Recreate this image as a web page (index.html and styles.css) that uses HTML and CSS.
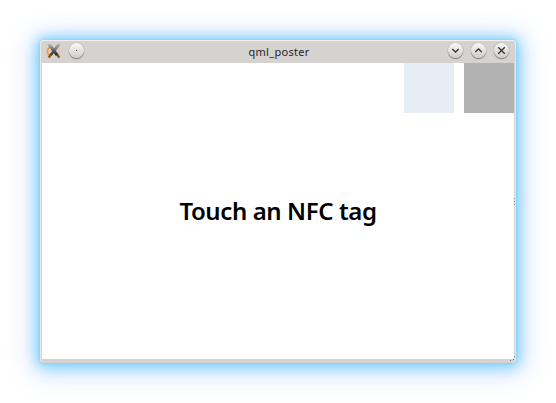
FILE: index.html
```html
<!DOCTYPE html>
<html lang="en">
<head>
<meta charset="utf-8">
<title>qml_poster</title>
<link rel="stylesheet" href="styles.css">
</head>
<body>
<div class="window">
  <header class="titlebar">
    <svg class="app-icon" width="16" height="16" viewBox="0 0 16 16">
      <defs>
        <linearGradient id="blade" x1="0" y1="0" x2="0" y2="1"><stop offset="0" stop-color="#b4b4b4"/><stop offset=".5" stop-color="#666"/><stop offset="1" stop-color="#1c1c1c"/></linearGradient>
      </defs>
      <path d="M4 4.2Q1 5.5 1.4 9Q1.8 11.4 3.6 12" fill="none" stroke="#ff951c" stroke-width="1.6"/>
      <path d="M12 4Q14.5 8 12.5 12" fill="none" stroke="#f5c795" stroke-width="1"/>
      <path d="M1.2 1.2L5 1.2L12.6 11.6L10 13L6.5 8.8Z" fill="url(#blade)"/>
      <path d="M14 .8L10.8 1.5L3.5 11.4L5.6 13L14 2.6Z" fill="url(#blade)" opacity=".9"/>
      <path d="M4.8 11.8L2.6 14.5M11.2 11.8L13.4 14.5" stroke="#80531c" stroke-width="2.2"/>
    </svg>
    <span class="button"><svg width="15" height="15" viewBox="0 0 15 15"><circle cx="7.5" cy="7.5" r=".55" fill="#333"/></svg></span>
    <h1 class="title">qml_poster</h1>
    <div class="controls">
      <span class="button"><svg width="15" height="15" viewBox="0 0 15 15"><path d="M4.3 6L7.5 9L10.7 6"/></svg></span>
      <span class="button"><svg width="15" height="15" viewBox="0 0 15 15"><path d="M4.3 9L7.5 6L10.7 9"/></svg></span>
      <span class="button"><svg width="15" height="15" viewBox="0 0 15 15"><path d="M4.2 4.2L10.8 10.8M10.8 4.2L4.2 10.8"/></svg></span>
    </div>
  </header>
  <main class="content">
    <div class="tiles"><div class="tile tile-blue"></div><div class="tile tile-gray"></div></div>
    <p class="message">Touch an NFC tag</p>
  </main>
  <svg class="side-grip" width="2" height="8" viewBox="0 0 2 8"><path d="M0 0h1v1H0zM0 3h1v1H0zM0 6h1v1H0z" fill="#888"/></svg>
  <svg class="corner-grip" width="8" height="7" viewBox="0 0 8 7"><path d="M6 0h1v1H6zM5 3h1v1H5zM2 4h1v1H2z" fill="#777"/></svg>
</div>
</body>
</html>
```
FILE: styles.css
```css
* { box-sizing: border-box; }
body {
  margin: 0;
  padding: 40px;
  height: 403px;
  overflow: hidden;
  background: #fff;
  font-family: "Noto Sans", sans-serif;
}
.window {
  position: relative;
  display: flex;
  flex-direction: column;
  width: 476px;
  height: 323px;
  padding: 0 2px 4px;
  background: #d6d2cf;
  border-radius: 4px;
  box-shadow:
    inset 0 1px #f2f0ee,
    inset 1px 0 #e9e8e7,
    inset -1px 0 #e9e8e7,
    0 0 3px rgba(90, 198, 255, .8),
    0 1px 14px 3px rgba(95, 200, 255, .8),
    0 3px 28px 7px rgba(140, 185, 255, .42);
}
.titlebar {
  display: flex;
  align-items: flex-start;
  height: 23px;
  padding: 3px 5px 0 4px;
}
.app-icon { flex: none; }
.button {
  flex: none;
  width: 15px;
  height: 15px;
  border-radius: 50%;
  background: linear-gradient(#f8f8f8, #cfcdcb);
  box-shadow: 0 0 1px #777, 0 1px 1px #777;
}
.app-icon + .button { margin-left: 7px; }
.button svg {
  display: block;
  fill: none;
  stroke: #333;
  stroke-width: 1.3;
}
.button circle { stroke: none; }
.title {
  flex: 1;
  margin: 0 0 0 26px;
  color: #262626;
  font-size: 11px;
  font-weight: 400;
  line-height: 17px;
  letter-spacing: .3px;
  text-align: center;
}
.controls { display: flex; gap: 8px; }
.content {
  flex: 1;
  min-height: 0;
  background: #fff;
}
.tiles {
  display: flex;
  justify-content: flex-end;
  gap: 10px;
}
.tile { width: 50px; height: 50px; }
.tile-blue { background: #e6edf5; }
.tile-gray { background: #b2b2b2; }
.message {
  margin: 81px 0 0;
  color: #000;
  font-size: 24px;
  font-weight: 600;
  line-height: 34px;
  letter-spacing: -.4px;
  text-align: center;
}
.side-grip { position: absolute; top: 158px; right: 0; }
.corner-grip { position: absolute; right: 0; bottom: 0; }
```
